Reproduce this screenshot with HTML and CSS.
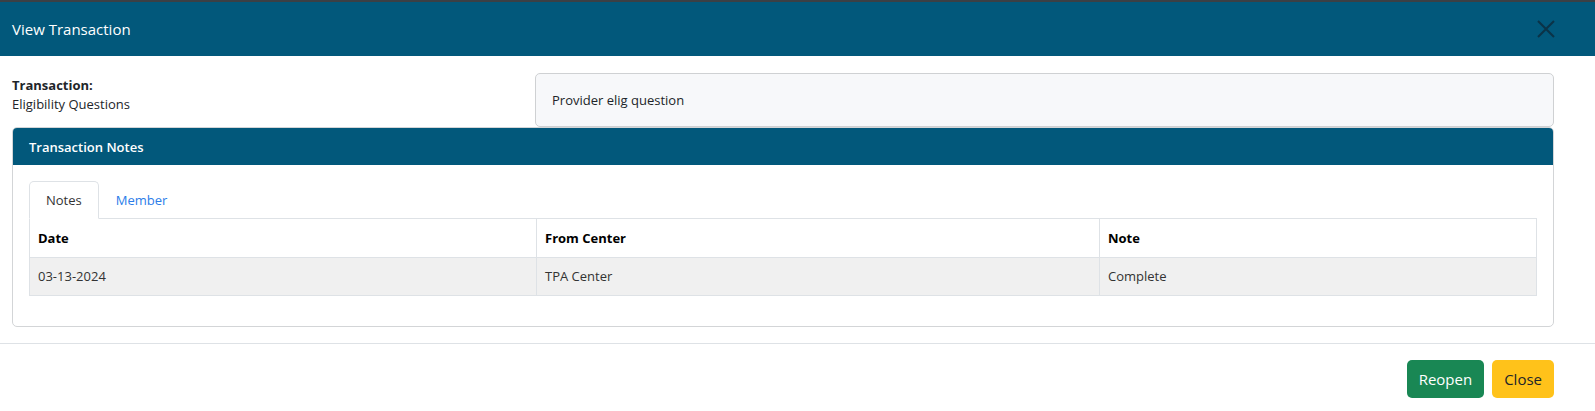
FILE: index.html
```html
<!DOCTYPE html>
<html>
<head>
<meta charset="utf-8">
<link rel="stylesheet" href="styles.css">
</head>
<body>
<div class="strip"></div>
<div class="modal-header">
  <span class="title">View Transaction</span>
  <svg class="close-x" width="18" height="18" viewBox="0 0 18 18"><path d="M1 1L17 17M17 1L1 17" stroke="#0b3347" stroke-width="2" fill="none"/></svg>
</div>
<div class="modal-body">
  <div class="top-row">
    <div class="info">
      <div class="label">Transaction:</div>
      <div class="value">Eligibility Questions</div>
    </div>
    <div class="desc">Provider elig question</div>
  </div>
  <div class="card">
    <div class="card-header">Transaction Notes</div>
    <div class="card-body">
      <div class="tabs">
        <div class="tab active">Notes</div>
        <div class="tab">Member</div>
      </div>
      <table class="grid">
        <colgroup><col class="c1"><col class="c2"><col class="c3"></colgroup>
        <thead><tr><th>Date</th><th>From Center</th><th>Note</th></tr></thead>
        <tbody><tr><td>03-13-2024</td><td>TPA Center</td><td>Complete</td></tr></tbody>
      </table>
    </div>
  </div>
</div>
<div class="modal-footer">
  <button class="btn btn-green">Reopen</button>
  <button class="btn btn-yellow">Close</button>
</div>
</body>
</html>
```
FILE: styles.css
```css
* { box-sizing: border-box; }
html, body { overflow: hidden; }
body {
  margin: 0;
  background: #fff;
  font-family: "Segoe UI", "Open Sans", "Noto Sans", sans-serif;
  font-size: 13px;
  color: #212529;
}
.strip { height: 2px; background: #3b4045; }
.modal-header {
  height: 54px;
  background: #02587b;
  display: flex;
  align-items: center;
  justify-content: space-between;
  padding: 0 40px 0 12px;
}
.title { color: #fff; font-size: 15px; }
.close-x { display: block; }
.modal-body { padding: 17px 41px 16px 12px; }
.top-row { display: flex; }
.info { width: 523px; flex: none; padding-top: 3px; line-height: 19px; }
.label { font-weight: 700; }
.desc {
  flex: 1;
  height: 54px;
  background: #f7f8fa;
  border: 1px solid #cfd1d3;
  border-radius: 5px;
  padding: 0 16px;
  display: flex;
  align-items: center;
}
.card {
  border: 1px solid #d3d5d7;
  border-radius: 5px;
  overflow: hidden;
}
.card-header {
  height: 37px;
  background: #02587b;
  color: #fff;
  font-weight: 600;
  padding: 0 16px;
  display: flex;
  align-items: center;
}
.card-body { padding: 16px 16px 30px 16px; }
.tabs { display: flex; border-bottom: 1px solid #dee2e6; height: 38px; }
.tab {
  padding: 0 16px;
  display: flex;
  align-items: center;
  color: #2b7de9;
  border: 1px solid transparent;
  border-top-left-radius: 5px;
  border-top-right-radius: 5px;
  margin-bottom: -1px;
}
.tab.active { color: #333; border-color: #dee2e6 #dee2e6 #fff; background: #fff; }
.grid { width: 100%; border-collapse: collapse; table-layout: fixed; }
.c1 { width: 507px; } .c2 { width: 563px; }
.grid th, .grid td {
  border: 1px solid #dee2e6;
  height: 38px;
  padding: 0 8px;
  text-align: left;
}
.grid th { font-weight: 700; color: #000; border-top: none; }
.grid td { background: #f0f0f0; color: #333; }
.modal-footer {
  border-top: 1px solid #dee2e6;
  display: flex;
  justify-content: flex-end;
  gap: 8px;
  padding: 16px 41px 13px 12px;
}
.btn {
  font-family: inherit;
  font-size: 15px;
  height: 38px;
  border: none;
  border-radius: 5px;
  padding: 0 12px;
}
.btn-green { background: #198754; color: #fff; }
.btn-yellow { background: #ffc21a; color: #212529; }
```
